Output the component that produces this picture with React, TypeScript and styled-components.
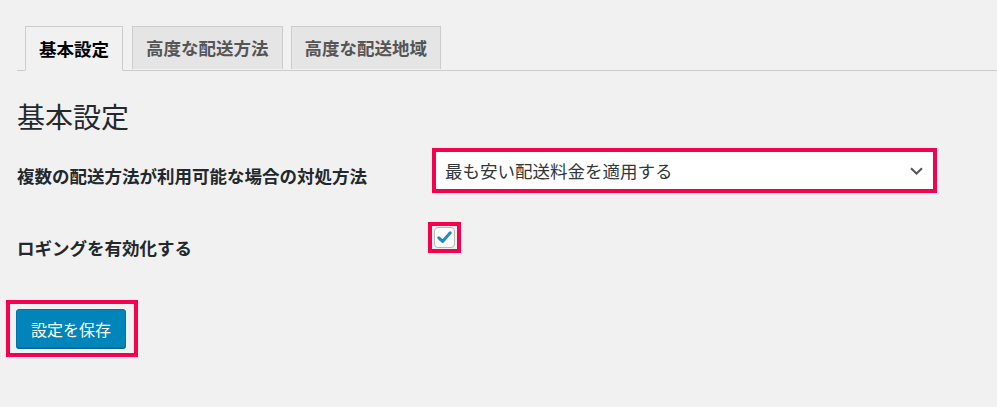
import React from "react";
import styled, { createGlobalStyle } from "styled-components";

const GlobalStyle = createGlobalStyle`
  html, body {
    margin: 0;
    padding: 0;
    background: #f1f1f1;
  }
  body {
    font-family: "Noto Sans CJK JP", "Noto Sans", sans-serif;
    color: #23282d;
  }
`;

const HIGHLIGHT = "#f5024f";

const Page = styled.div`
  padding: 26px 0 40px 17px;
`;

const TabBar = styled.div`
  display: flex;
  gap: 8px;
  padding-left: 8px;
  border-bottom: 1px solid #ccc;
  height: 44px;
  align-items: flex-end;
`;

const Tab = styled.div<{ $active?: boolean }>`
  box-sizing: border-box;
  height: ${(p) => (p.$active ? "45px" : "43px")};
  margin-bottom: ${(p) => (p.$active ? "-1px" : "1px")};
  margin-right: ${(p) => (p.$active ? "1px" : "0")};
  padding: 0 13px;
  display: flex;
  align-items: center;
  border: 1px solid #ccc;
  border-bottom-color: ${(p) => (p.$active ? "#f1f1f1" : "#ccc")};
  border-bottom-width: ${(p) => (p.$active ? "1px" : "0")};
  background: ${(p) => (p.$active ? "#f1f1f1" : "#e5e5e5")};
  color: ${(p) => (p.$active ? "#000" : "#555")};
  font-size: 17.5px;
  font-weight: 700;
  line-height: 1;
  white-space: nowrap;
`;

const Heading = styled.h2`
  margin: 27px 0 14px;
  font-size: 28px;
  line-height: 36px;
  font-weight: 400;
  color: #23282d;
`;

const Row = styled.div<{ $gap?: number }>`
  display: grid;
  grid-template-columns: 415px auto;
  align-items: start;
  margin-bottom: ${(p) => p.$gap ?? 0}px;
`;

const Label = styled.div<{ $top: number }>`
  padding-top: ${(p) => p.$top}px;
  font-size: 17.5px;
  line-height: 22px;
  font-weight: 700;
  color: #23282d;
`;

const Highlight = styled.div<{ $pad: string; $shift?: number }>`
  display: inline-flex;
  border: 4px solid ${HIGHLIGHT};
  padding: ${(p) => p.$pad};
  margin-left: ${(p) => p.$shift ?? 0}px;
  align-self: start;
  justify-self: start;
`;

const Select = styled.div`
  box-sizing: border-box;
  width: 497px;
  height: 37px;
  background: #fff;
  display: flex;
  align-items: center;
  justify-content: space-between;
  padding: 0 10px 0 9px;
  font-size: 17.5px;
  color: #32373c;
`;

const Checkbox = styled.div`
  box-sizing: border-box;
  width: 21px;
  height: 21px;
  background: #fff;
  border: 1px solid #b4b9be;
  border-radius: 4px;
  display: flex;
  align-items: center;
  justify-content: center;
`;

const ButtonArea = styled.div`
  margin-left: -11px;
  margin-top: 41px;
`;

const SaveButton = styled.button`
  box-sizing: border-box;
  height: 39px;
  padding: 0 14px;
  background: #0085ba;
  border: 1px solid #0073aa;
  border-radius: 3px;
  box-shadow: 0 1px 0 #006799;
  color: #fff;
  font-family: "Noto Sans CJK JP", "Noto Sans", sans-serif;
  font-size: 16px;
  cursor: pointer;
`;

const Chevron = () => (
  <svg width="13" height="8" viewBox="0 0 13 8">
    <path d="M1 1.2 L6.5 6.5 L12 1.2" fill="none" stroke="#555" strokeWidth="2" />
  </svg>
);

const Check = () => (
  <svg width="15" height="13" viewBox="0 0 15 13">
    <path
      d="M1.8 6.8 L5.6 10.4 L13.2 1.8"
      fill="none"
      stroke="#1e8cbe"
      strokeWidth="3"
      strokeLinecap="round"
      strokeLinejoin="round"
    />
  </svg>
);

export default function App() {
  return (
    <>
      <GlobalStyle />
      <Page>
        <TabBar>
          <Tab $active>基本設定</Tab>
          <Tab>高度な配送方法</Tab>
          <Tab>高度な配送地域</Tab>
        </TabBar>
        <Heading>基本設定</Heading>
        <Row $gap={29}>
          <Label $top={17}>複数の配送方法が利用可能な場合の対処方法</Label>
          <Highlight $pad="0">
            <Select>
              <span>最も安い配送料金を適用する</span>
              <Chevron />
            </Select>
          </Highlight>
        </Row>
        <Row>
          <Label $top={15}>ロギングを有効化する</Label>
          <Highlight $pad="1px 2px" $shift={-4}>
            <Checkbox>
              <Check />
            </Checkbox>
          </Highlight>
        </Row>
        <ButtonArea>
          <Highlight $pad="5px 8px 5px 6px">
            <SaveButton>設定を保存</SaveButton>
          </Highlight>
        </ButtonArea>
      </Page>
    </>
  );
}
